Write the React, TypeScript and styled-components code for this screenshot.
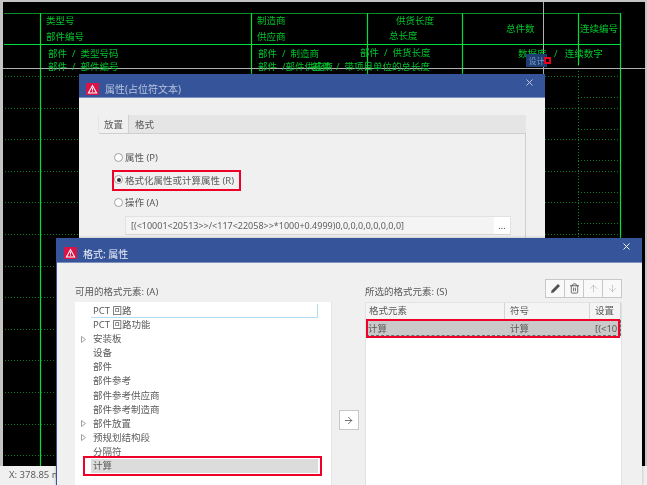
import React, { FC, ReactNode } from 'react';
import styled, { createGlobalStyle } from 'styled-components';
import { ArrowDown, ArrowRight, ArrowUp, Trash2, X } from 'lucide-react';

const GlobalStyle = createGlobalStyle`
  html, body {
    margin: 0;
    padding: 0;
    background: #ffffff;
  }
  body {
    font-family: "Noto Sans", "Noto Sans CJK SC", sans-serif;
  }
`;

const Screen = styled.div`
  position: relative;
  display: flex;
  flex-direction: column;
  width: 647px;
  height: 485px;
  overflow: hidden;
  background: #ffffff;
  filter: blur(0.3px);
`;

const Viewport = styled.div`
  display: flex;
  flex: 1;
  min-height: 0;
  padding: 2px 2px 0 3px;
  background: #c4c4c4;
`;

const Canvas = styled.div`
  position: relative;
  flex: 1;
  background: #000000;
`;

const Drawing = styled.svg`
  display: block;
  width: 642px;
  height: 464px;
`;

const CadLabel = styled.span<{ $x: number; $y: number }>`
  position: absolute;
  left: ${(p) => p.$x - 3}px;
  top: ${(p) => p.$y - 9}px;
  font-size: 9.5px;
  line-height: 14px;
  white-space: pre;
  color: #00c42c;
`;

const Badge = styled.span`
  position: absolute;
  left: 523px;
  top: 52px;
  width: 21px;
  height: 13px;
  background: #1c3c72;
  color: #7f9fc4;
  font-size: 8px;
  line-height: 13px;
  text-align: center;
`;

const Grip = styled.span`
  position: absolute;
  left: 541px;
  top: 55px;
  width: 3px;
  height: 3px;
  border: 2px solid #e8001c;
  background: #000000;
`;

const StatusBar = styled.div`
  flex: none;
  height: 19px;
  padding-left: 9px;
  background: #f0f0f0;
  color: #5c5c5c;
  font-size: 9.5px;
  line-height: 18px;
`;

const Dialog = styled.section<{ $left: number; $top: number; $width: number; $height: number }>`
  position: absolute;
  left: ${(p) => p.$left}px;
  top: ${(p) => p.$top}px;
  display: flex;
  flex-direction: column;
  width: ${(p) => p.$width}px;
  height: ${(p) => p.$height}px;
  overflow: hidden;
  background: #f0f0f0;
  box-shadow: 0 0 3px rgba(0, 0, 0, 0.25);
`;

const TitleBar = styled.header<{ $active?: boolean }>`
  display: flex;
  flex: none;
  align-items: center;
  gap: 6px;
  height: ${(p) => (p.$active ? '25px' : '24px')};
  padding: 6px 10px 0 7px;
  background: #36549a;
  border-bottom: 1px solid #7d8fbc;
  box-sizing: border-box;
  color: ${(p) => (p.$active ? '#eef1f8' : '#b9c4de')};
  font-size: 10px;
`;

const TitleText = styled.span`
  flex: 1;
`;

const CloseIcon = styled(X)<{ $active?: boolean }>`
  align-self: flex-start;
  margin-top: -3px;
  color: ${(p) => (p.$active ? '#ffffff' : '#c7cfe3')};
`;

const AppBadge = styled.svg`
  flex: none;
  display: block;
`;

/* first dialog */
const PlacementBody = styled.div`
  flex: 1;
  padding: 17px 19px 0 19px;
`;

const TabStrip = styled.div`
  display: flex;
  height: 18px;
  background: #e5e5e5;
  color: #5a5a5a;
  font-size: 9.5px;
  line-height: 19px;
`;

const Tab = styled.div<{ $active?: boolean }>`
  padding: 0 ${(p) => (p.$active ? '5px' : '6px')};
  margin-left: ${(p) => (p.$active ? '1px' : '0')};
  background: ${(p) => (p.$active ? '#f0f0f0' : 'transparent')};
  border-right: ${(p) => (p.$active ? '1px solid #d0d0d0' : '0')};
`;

const TabPanel = styled.div`
  display: flex;
  flex-direction: column;
  height: 120px;
  padding: 12px 0 0 14px;
  margin-left: 1px;
  border-top: 1px solid #cfcfcf;
  border-right: 1px solid #cfcfcf;
  color: #5a5a5a;
  font-size: 9.5px;
`;

const RadioRow = styled.label`
  display: flex;
  flex: none;
  align-items: center;
  gap: 2px;
  height: 22.5px;
  padding-left: 1px;
`;

const Radio = styled.span<{ $checked?: boolean }>`
  flex: none;
  display: flex;
  align-items: center;
  justify-content: center;
  width: 7px;
  height: 7px;
  border: 1px solid #a0a0a0;
  border-radius: 50%;
  background: #ffffff;
  &::after {
    content: '';
    display: ${(p) => (p.$checked ? 'block' : 'none')};
    width: 4px;
    height: 4px;
    border-radius: 50%;
    background: #333333;
  }
`;

const FormulaField = styled.div`
  display: flex;
  flex: none;
  align-items: center;
  justify-content: space-between;
  width: 386px;
  height: 19px;
  margin: 2.5px 0 0 12px;
  padding-left: 5px;
  box-sizing: border-box;
  background: #f4f4f4;
  border: 1px solid #e2e2e2;
  border-bottom-color: #d4d4d4;
  color: #5f5f5f;
  font-size: 9px;
`;

const MoreButton = styled.span`
  width: 16px;
  height: 17px;
  background: #ffffff;
  text-align: center;
  font-size: 9px;
  line-height: 17px;
  color: #444444;
`;

/* second dialog */
const FormatBody = styled.div`
  display: grid;
  flex: 1;
  grid-template-columns: 257px 33px 257px;
  grid-template-rows: 23px 1fr;
  padding: 16px 0 0 18px;
  color: #5a5a5a;
  font-size: 9.5px;
`;

const FormatDialog = styled(Dialog)`
  border-left: 1px solid #36549a;
  box-sizing: border-box;
`;

const ColumnHead = styled.div`
  display: flex;
  align-items: flex-start;
  justify-content: space-between;
`;

const ColumnLabel = styled.span`
  margin-top: 6px;
  line-height: 14px;
`;

const Toolbar = styled.div`
  display: flex;
`;

const ToolButton = styled.button<{ $disabled?: boolean }>`
  display: flex;
  align-items: center;
  justify-content: center;
  width: 20px;
  height: 19px;
  padding: 0;
  box-sizing: border-box;
  background: #f9f9f9;
  border: 1px solid #c8c8c8;
  margin-left: -1px;
  color: ${(p) => (p.$disabled ? '#b4b4b4' : '#505050')};
`;

const ListBox = styled.div`
  position: relative;
  padding-top: 2px;
  background: #ffffff;
  border-right: 1px solid #e6e6e6;
`;

const ListRow = styled.div`
  display: flex;
  align-items: center;
  height: 14.1px;
  font-size: 9.5px;
`;

const Caret = styled.span`
  flex: none;
  display: flex;
  width: 16px;
  padding-left: 6px;
  box-sizing: border-box;
`;

const CaretShape = styled.svg`
  display: block;
  color: #a0a0a0;
`;

const RowText = styled.span<{ $focus?: boolean; $selected?: boolean }>`
  width: 225px;
  height: 14.1px;
  padding-left: 2px;
  line-height: 14px;
  background: ${(p) => (p.$selected ? '#dcdcdc' : 'transparent')};
  box-shadow: ${(p) => (p.$focus ? 'inset -1px -1px 0 #b5dcf5' : 'none')};
`;

const ArrowColumn = styled.div`
  display: flex;
  justify-content: center;
  padding-top: 108px;
`;

const MoveButton = styled.button`
  display: flex;
  align-items: center;
  justify-content: center;
  width: 20px;
  height: 20px;
  padding: 0;
  background: #ffffff;
  border: 1px solid #c8c8c8;
  color: #444444;
`;

const GridBox = styled.div`
  position: relative;
  background: #ffffff;
  border: 1px solid #e2e2e2;
  border-bottom: 0;
`;

const GridRow = styled.div<{ $selected?: boolean }>`
  display: grid;
  grid-template-columns: 139px 85px 1fr;
  height: 16.5px;
  line-height: 15px;
  overflow: hidden;
  box-sizing: border-box;
  background: ${(p) => (p.$selected ? '#c9c9c9' : '#f4f4f4')};
  border: ${(p) => (p.$selected ? '1px dashed #6a6a6a' : '0')};
`;

const GridCell = styled.span<{ $head?: boolean }>`
  padding-left: ${(p) => (p.$head ? '5px' : '4px')};
  white-space: nowrap;
  border-right: ${(p) => (p.$head ? '1px solid #d4d4d4' : '0')};
  &:first-child {
    padding-left: ${(p) => (p.$head ? '3px' : '1px')};
  }
`;

const Annotation = styled.div<{ $left: number; $top: number; $width: number; $height: number }>`
  position: absolute;
  left: ${(p) => p.$left}px;
  top: ${(p) => p.$top}px;
  width: ${(p) => p.$width}px;
  height: ${(p) => p.$height}px;
  box-sizing: border-box;
  border: 2px solid #ee0028;
  pointer-events: none;
`;

const WarningBadge: FC = () => (
  <AppBadge width='13' height='12' viewBox='0 0 14 13'>
    <rect width='14' height='13' fill='#dc1347' />
    <path d='M7 1.5 L12.4 11.5 H1.6 Z M7 3.9 L3.5 10.4 H10.5 Z' fill='#ffffff' fillRule='evenodd' />
    <path d='M7 5 V8.1 M7 8.9 V9.9' stroke='#ffffff' strokeWidth='1' />
  </AppBadge>
);

const PencilGlyph: FC = () => (
  <svg width='11' height='11' viewBox='0 0 11 11'>
    <path d='M8 1 L10 3 L3.6 9.4 L1 10 L1.6 7.4 Z' fill='#505050' />
  </svg>
);

const TreeCaret: FC = () => (
  <CaretShape width='5' height='7' viewBox='0 0 5 7'>
    <path d='M0.5 0.5 L4.5 3.5 L0.5 6.5 Z' fill='#ffffff' stroke='currentColor' strokeWidth='1' />
  </CaretShape>
);

const TitleRow: FC<{ title: string; active?: boolean }> = ({ title, active }) => (
  <TitleBar $active={active}>
    <WarningBadge />
    <TitleText>{title}</TitleText>
    <CloseIcon $active={active} size={11} strokeWidth={2} />
  </TitleBar>
);

const DOTTED_ROWS = Array.from({ length: 13 }, (_, i) => 76 + i * 31.6);
const SOLID_COLUMNS: [number, number][] = [
  [40, 466],
  [251, 74],
  [367, 74],
  [462, 74],
  [578, 65],
  [620, 466],
];

const CAD_LABELS: { x: number; y: number; text: string }[] = [
  { x: 46, y: 21, text: '类型号' },
  { x: 46, y: 37, text: '部件编号' },
  { x: 48, y: 54, text: '部件  /  类型号码' },
  { x: 48, y: 67, text: '部件  /  部件编号' },
  { x: 257, y: 21, text: '制造商' },
  { x: 257, y: 37, text: '供应商' },
  { x: 258, y: 54, text: '部件  /  制造商' },
  { x: 258, y: 67, text: '部件  /部件供应商' },
  { x: 396, y: 21, text: '供货长度' },
  { x: 389, y: 36, text: '总长度' },
  { x: 360, y: 53, text: '部件  /  供货长度' },
  { x: 312, y: 67, text: '部件  /  带项目单位的总长度' },
  { x: 506, y: 29, text: '总件数' },
  { x: 580, y: 29, text: '连续编号' },
  { x: 518, y: 54, text: '数据库   /   连续数字' },
];

const SOURCE_ITEMS: { text: string; caret?: boolean; focus?: boolean; selected?: boolean }[] = [
  { text: 'PCT 回路', focus: true },
  { text: 'PCT 回路功能' },
  { text: '安装板', caret: true },
  { text: '设备' },
  { text: '部件' },
  { text: '部件参考' },
  { text: '部件参考供应商' },
  { text: '部件参考制造商' },
  { text: '部件放置', caret: true },
  { text: '预规划结构段', caret: true },
  { text: '分隔符' },
  { text: '计算', selected: true },
];

const CadSheet: FC<{ children?: ReactNode }> = ({ children }) => (
  <Canvas>
    <Drawing viewBox='3 2 642 464'>
      <line x1='4' x2='620' y1='13.5' y2='13.5' stroke='#0a8a2a' />
      <line x1='4' x2='620' y1='44.5' y2='44.5' stroke='#00e03c' />
      {SOLID_COLUMNS.map(([x, bottom]) => (
        <line key={x} x1={x + 0.5} x2={x + 0.5} y1='13' y2={bottom} stroke='#00e03c' strokeWidth='1.2' />
      ))}
      {DOTTED_ROWS.map((y) => (
        <g key={y} stroke='#0a7a26' strokeDasharray='1 2'>
          <line x1='5' x2='620' y1={Math.round(y) + 0.5} y2={Math.round(y) + 0.5} />
          <line x1='578' x2='620' y1={Math.round(y + 21) + 0.5} y2={Math.round(y + 21) + 0.5} />
        </g>
      ))}
      <line x1='578.5' x2='578.5' y1='65' y2='240' stroke='#0a8a2a' strokeDasharray='1 2' />
      <line x1='3' x2='645' y1='68.5' y2='68.5' stroke='#b0b0b0' />
      <line x1='543.5' x2='543.5' y1='2' y2='74' stroke='#b0b0b0' />
    </Drawing>
    {children}
  </Canvas>
);

const App: FC = () => {
  return (
    <Screen>
      <GlobalStyle />
      <Viewport>
        <CadSheet>
          {CAD_LABELS.map((label) => (
            <CadLabel key={label.text} $x={label.x} $y={label.y}>
              {label.text}
            </CadLabel>
          ))}
          <Badge>设计</Badge>
          <Grip />
        </CadSheet>
      </Viewport>
      <StatusBar>X: 378.85 m</StatusBar>

      <Dialog $left={79} $top={74} $width={466} $height={166}>
        <TitleRow title='属性(占位符文本)' />
        <PlacementBody>
          <TabStrip>
            <Tab $active>放置</Tab>
            <Tab>格式</Tab>
          </TabStrip>
          <TabPanel>
            <RadioRow>
              <Radio />
              属性 (P)
            </RadioRow>
            <RadioRow>
              <Radio $checked />
              格式化属性或计算属性 (R)
            </RadioRow>
            <RadioRow>
              <Radio />
              操作 (A)
            </RadioRow>
            <FormulaField>
              {'[(<10001<20513>>/<117<22058>>*1000+0.4999)0,0,0,0,0,0,0,0,0]'}
              <MoreButton>...</MoreButton>
            </FormulaField>
          </TabPanel>
        </PlacementBody>
        <Annotation $left={33} $top={96} $width={129} $height={21} />
      </Dialog>

      <FormatDialog $left={56} $top={238} $width={586} $height={247}>
        <TitleRow title='格式: 属性' active />
        <FormatBody>
          <ColumnHead>
            <ColumnLabel>可用的格式元素: (A)</ColumnLabel>
          </ColumnHead>
          <span />
          <ColumnHead>
            <ColumnLabel>所选的格式元素: (S)</ColumnLabel>
            <Toolbar>
              <ToolButton>
                <PencilGlyph />
              </ToolButton>
              <ToolButton>
                <Trash2 size={11} strokeWidth={1.8} />
              </ToolButton>
              <ToolButton $disabled>
                <ArrowUp size={11} strokeWidth={1.5} />
              </ToolButton>
              <ToolButton $disabled>
                <ArrowDown size={11} strokeWidth={1.5} />
              </ToolButton>
            </Toolbar>
          </ColumnHead>

          <ListBox>
            {SOURCE_ITEMS.map((item) => (
              <ListRow key={item.text}>
                <Caret>{item.caret && <TreeCaret />}</Caret>
                <RowText $focus={item.focus} $selected={item.selected}>
                  {item.text}
                </RowText>
              </ListRow>
            ))}
            <Annotation $left={8} $top={154} $width={239} $height={20} />
          </ListBox>

          <ArrowColumn>
            <MoveButton>
              <ArrowRight size={11} strokeWidth={1.6} />
            </MoveButton>
          </ArrowColumn>

          <GridBox>
            <GridRow>
              <GridCell $head>格式元素</GridCell>
              <GridCell $head>符号</GridCell>
              <GridCell $head>设置</GridCell>
            </GridRow>
            <GridRow $selected>
              <GridCell>计算</GridCell>
              <GridCell>计算</GridCell>
              <GridCell>{'[(<10'}</GridCell>
            </GridRow>
            <Annotation $left={0} $top={16} $width={254} $height={19} />
          </GridBox>
        </FormatBody>
      </FormatDialog>
    </Screen>
  );
};

export default App;
